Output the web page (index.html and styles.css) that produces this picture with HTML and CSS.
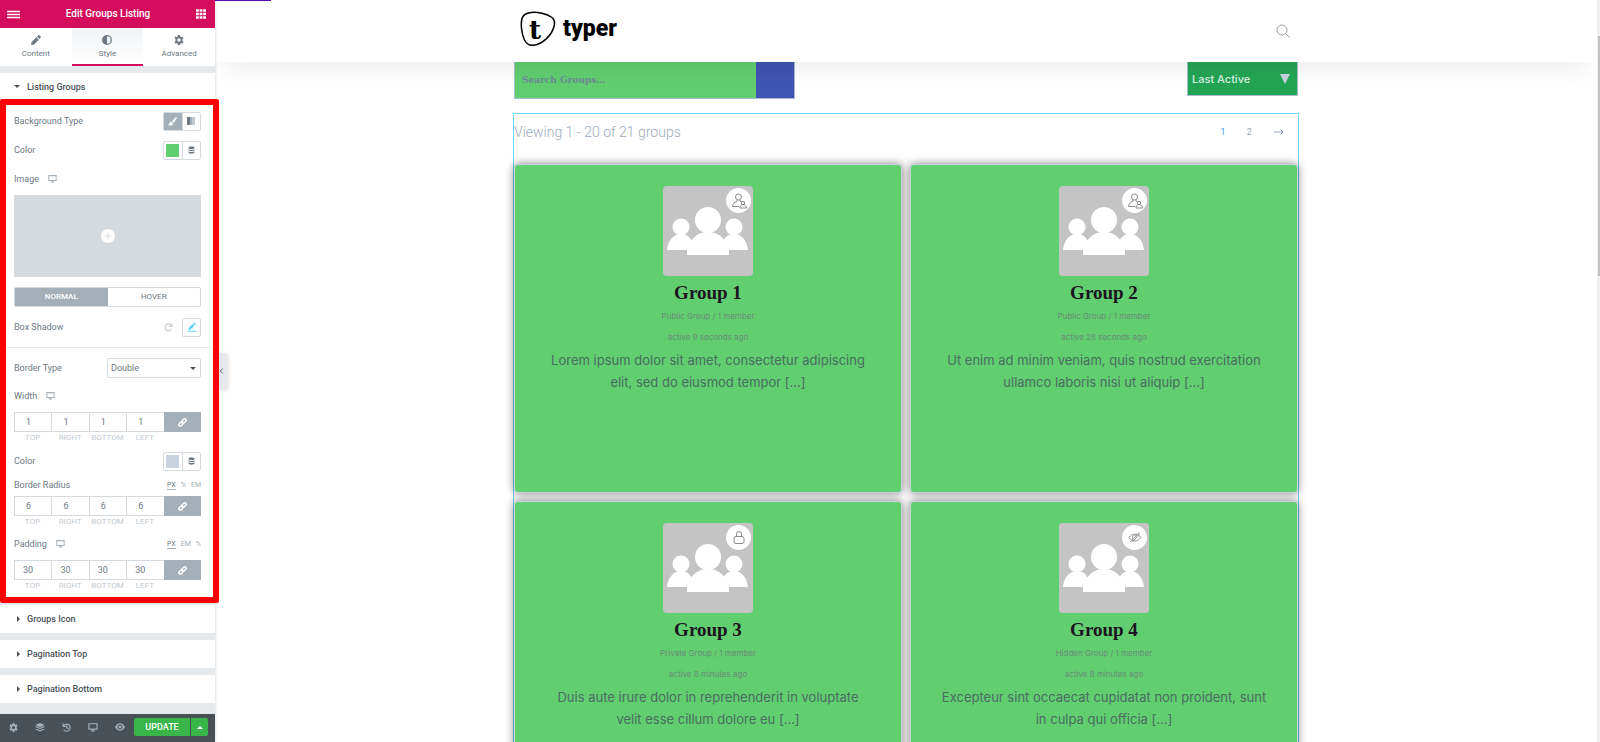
FILE: index.html
```html
<!DOCTYPE html>
<html lang="en">
<head>
  <meta charset="UTF-8">
  <meta name="viewport" content="width=device-width, initial-scale=1">
  <title>Edit Groups Listing</title>
  <link rel="stylesheet" href="styles.css">
</head>
<body>
  <!-- shared icons -->
  <svg class="sprite" aria-hidden="true">
    <symbol id="i-desktop" viewBox="0 0 16 14"><path d="M1.5 1h13v8.500h-13zM8 9.500V12M5 12.500h6" fill="none" stroke="currentColor" stroke-width="1.800"/></symbol>
    <symbol id="i-db" viewBox="0 0 14 16"><path d="M1 3c0-3 12-3 12 0v1.500c0 2-12 2-12 0zM1 6.500c2 2 10 2 12 0v2c0 2-12 2-12 0zM1 10.500c2 2 10 2 12 0v2.500c0 3-12 3-12 0z" fill="currentColor"/></symbol>
    <symbol id="i-link" viewBox="0 0 16 16"><g fill="none" stroke="currentColor" stroke-width="2.600" transform="rotate(-45 8 8)"><rect x="0" y="5.500" width="8.500" height="5" rx="2.500"/><rect x="7.500" y="5.500" width="8.500" height="5" rx="2.500"/></g></symbol>
    <symbol id="i-gear" viewBox="0 0 16 16"><path fill="currentColor" fill-rule="evenodd" d="M6.500 0h3l.5 2.200 1.500.8 2.200-.7 1.500 2.600L13.600 6.500v3l1.600 1.600-1.500 2.600-2.200-.7-1.500.8-.5 2.200h-3L6 13.800 4.500 13l-2.200.7-1.500-2.600L2.400 9.500v-3L.8 4.900l1.500-2.600 2.200.7L6 2.200zM8 5.200a2.800 2.800 0 100 5.600 2.800 2.800 0 000-5.600z"/></symbol>
    <symbol id="i-pencil" viewBox="0 0 16 16"><path fill="currentColor" d="M0 16l1-5 7.500-7.500 4 4L5 15zM9.500 2.500L11.500.6c.6-.6 1.400-.6 2 0l1.900 1.900c.6.6.6 1.400 0 2l-1.900 2z"/></symbol>
    <symbol id="i-people" viewBox="0 0 90 90">
      <g fill="#fff"><circle cx="18" cy="41" r="8.500"/><circle cx="71" cy="41" r="8.500"/><circle cx="45" cy="34" r="13"/>
      <path d="M4 64c1-10 7-16 14-16s11 4 14 16zM57 64c3-12 7-16 14-16s13 6 14 16zM24 69v-6C29 50 36 46 45 46s16 4 21 17v6z"/></g>
    </symbol>
    <symbol id="i-public" viewBox="0 0 16 16"><g fill="none" stroke="currentColor"><circle cx="7.500" cy="4" r="3"/><path d="M6 7v1.500C3 9.500 1.500 11 1.500 13.500H8M9 7v1l1.500 1"/><circle cx="12" cy="10" r="1.700"/><path d="M11 11.500c-1.500.8-2 2-2 3.500h6.500c0-1.500-.8-2.700-2.500-3.500"/></g></symbol>
    <symbol id="i-lock" viewBox="0 0 16 16"><g fill="none" stroke="currentColor"><rect x="3" y="6.500" width="10" height="7" rx="2"/><path d="M5.500 6.500V4a2.500 2.500 0 015 0v2.500"/></g></symbol>
    <symbol id="i-hidden" viewBox="0 0 16 16"><g fill="none" stroke="currentColor" stroke-width=".9"><path d="M2 7.500c3-4.500 9-4.500 12 0-3 4.500-9 4.500-12 0z"/><path d="M6 9a2.300 2.300 0 014-3M3.500 12l9-10M5.500 12l7-8"/></g></symbol>
  </svg>

  <div class="editor">
    <aside class="panel">
      <header class="panel-header">
        <button class="plain" aria-label="Menu">
          <svg width="13" height="9" viewBox="0 0 13 9"><path d="M0 1.500h13M0 4.500h13M0 7.500h13" stroke="currentColor" stroke-width="1.700"/></svg>
        </button>
        <h1>Edit Groups Listing</h1>
        <button class="plain" aria-label="Widgets">
          <svg width="10" height="10" viewBox="0 0 10 10"><path d="M0 1.500h10M0 5h10M0 8.500h10" stroke="currentColor" stroke-width="2.600" stroke-dasharray="2.800 .8"/></svg>
        </button>
      </header>

      <nav class="panel-tabs">
        <button class="plain"><svg width="10" height="10"><use href="#i-pencil"/></svg>Content</button>
        <button class="plain active"><svg width="10" height="10" viewBox="0 0 16 16"><circle cx="8" cy="8" r="7" fill="none" stroke="currentColor" stroke-width="2"/><path d="M8 1a7 7 0 000 14z" fill="currentColor"/></svg>Style</button>
        <button class="plain"><svg width="10" height="10"><use href="#i-gear"/></svg>Advanced</button>
      </nav>

      <section class="listing">
        <h2 class="section-title open"><button class="plain">Listing Groups</button></h2>
        <div class="controls">
          <div class="row">
            <span class="label">Background Type</span>
            <div class="choices">
              <button class="plain on" aria-label="Classic"><svg width="9" height="9" viewBox="0 0 16 16"><path fill="currentColor" d="M15.500.5c1 1 0 2.500-1 4L10 10 7 7.500l5-5.500C13 .8 14.500-.3 15.500.5zM6 8.500L9 11c0 3.500-4 5.500-9 3 2.500-.5 2-5.500 6-5.500z"/></svg></button>
              <button class="plain" aria-label="Gradient"><svg width="8" height="8" viewBox="0 0 8 8"><path d="M0 0h3v8H0z" fill="#6d7882"/><path d="M3 0h2v8H3z" fill="#a4afb7"/><path d="M5 0h3v8H5z" fill="#c2cbd2"/></svg></button>
            </div>
          </div>
          <div class="row row-color">
            <span class="label">Color</span>
            <div class="choices">
              <button class="plain" aria-label="Pick color"><i class="swatch green"></i></button>
              <button class="plain" aria-label="Color library"><svg width="7" height="8"><use href="#i-db"/></svg></button>
            </div>
          </div>
          <div class="row row-image">
            <span class="label">Image</span>
            <svg class="device" width="9" height="8"><use href="#i-desktop"/></svg>
          </div>
          <button class="plain media" aria-label="Choose image">
            <svg width="14" height="14" viewBox="0 0 14 14"><circle cx="7" cy="7" r="7" fill="#fff"/><path d="M7 3.500v7M3.500 7h7" stroke="#d5dadf"/></svg>
          </button>
          <div class="states">
            <button class="plain on">NORMAL</button>
            <button class="plain">HOVER</button>
          </div>
          <div class="row row-shadow">
            <span class="label">Box Shadow</span>
            <button class="plain reset" aria-label="Reset"><svg width="9" height="9" viewBox="0 0 16 16"><path d="M13 4a6.200 6.200 0 10.500 7M14 1v5H9" fill="none" stroke="currentColor" stroke-width="2"/></svg></button>
            <button class="plain edit" aria-label="Edit shadow"><svg width="10" height="10" viewBox="0 0 16 16"><path fill="currentColor" d="M2 13l1-4 6-6 3 3-6.500 6zM10 2l1.500-1.500 3 3L13 5zM1 14h14v1.500H1z"/></svg></button>
          </div>

          <div class="row row-type">
            <label class="label" for="borderType">Border Type</label>
            <div class="select">
              <select id="borderType">
                <option>Double</option>
                <option>Solid</option>
                <option>Dotted</option>
              </select>
            </div>
          </div>
          <div class="row row-width">
            <span class="label">Width</span>
            <svg class="device" width="9" height="8"><use href="#i-desktop"/></svg>
          </div>
          <div class="dimensions">
            <label><input type="text" value="1">TOP</label>
            <label><input type="text" value="1">RIGHT</label>
            <label><input type="text" value="1">BOTTOM</label>
            <label><input type="text" value="1">LEFT</label>
            <button class="plain" aria-label="Link values"><svg width="9" height="9"><use href="#i-link"/></svg></button>
          </div>
          <div class="row row-border-color">
            <span class="label">Color</span>
            <div class="choices">
              <button class="plain" aria-label="Pick border color"><i class="swatch gray"></i></button>
              <button class="plain" aria-label="Color library"><svg width="7" height="8"><use href="#i-db"/></svg></button>
            </div>
          </div>
          <div class="row row-radius">
            <span class="label">Border Radius</span>
            <div class="units"><button class="plain on">PX</button><button class="plain">%</button><button class="plain">EM</button></div>
          </div>
          <div class="dimensions">
            <label><input type="text" value="6">TOP</label>
            <label><input type="text" value="6">RIGHT</label>
            <label><input type="text" value="6">BOTTOM</label>
            <label><input type="text" value="6">LEFT</label>
            <button class="plain" aria-label="Link values"><svg width="9" height="9"><use href="#i-link"/></svg></button>
          </div>
          <div class="row row-padding">
            <span class="label">Padding</span>
            <svg class="device" width="9" height="8"><use href="#i-desktop"/></svg>
            <div class="units"><button class="plain on">PX</button><button class="plain">EM</button><button class="plain">%</button></div>
          </div>
          <div class="dimensions">
            <label><input type="text" value="30">TOP</label>
            <label><input type="text" value="30">RIGHT</label>
            <label><input type="text" value="30">BOTTOM</label>
            <label><input type="text" value="30">LEFT</label>
            <button class="plain" aria-label="Link values"><svg width="9" height="9"><use href="#i-link"/></svg></button>
          </div>
        </div>
      </section>

      <div class="sections">
        <h2 class="section-title"><button class="plain">Groups Icon</button></h2>
        <h2 class="section-title"><button class="plain">Pagination Top</button></h2>
        <h2 class="section-title"><button class="plain">Pagination Bottom</button></h2>
      </div>

      <footer class="panel-footer">
        <div class="tools">
          <button class="plain" aria-label="Settings"><svg width="9" height="9"><use href="#i-gear"/></svg></button>
          <button class="plain" aria-label="Navigator"><svg width="10" height="9" viewBox="0 0 16 15"><path fill="currentColor" d="M8 0l8 3.500L8 7 0 3.500zM0 6.500l2-1 6 2.700 6-2.700 2 1L8 10zM0 10.500l2-1 6 2.700 6-2.700 2 1L8 14z"/></svg></button>
          <button class="plain" aria-label="History"><svg width="9" height="9" viewBox="0 0 16 16"><path d="M2.500 5.500a6.300 6.300 0 11.500 6.500M2 1v5h5M8.500 4.500v4l3 1.500" fill="none" stroke="currentColor" stroke-width="2"/></svg></button>
          <button class="plain" aria-label="Responsive mode"><svg width="10" height="9"><use href="#i-desktop"/></svg></button>
          <button class="plain" aria-label="Preview"><svg width="10" height="8" viewBox="0 0 16 12"><path fill="currentColor" fill-rule="evenodd" d="M0 6c4-8 12-8 16 0-4 8-12 8-16 0zM8 2a4 4 0 100 8 4 4 0 000-8z"/><circle cx="8" cy="6" r="2.500" fill="currentColor"/></svg></button>
        </div>
        <div class="publish">
          <button class="plain update">UPDATE</button>
          <button class="plain more" aria-label="Save options"></button>
        </div>
      </footer>

      <button class="plain collapse" aria-label="Hide panel"><svg width="5" height="6" viewBox="0 0 5 6"><path d="M4 .5L1 3l3 2.500" fill="none" stroke="currentColor"/></svg></button>
    </aside>

    <main class="preview">
      <header class="site-header">
        <div class="container">
          <a class="logo" href="#">
            <svg width="36" height="36" viewBox="0 0 36 36"><path d="M11 1.500C17 .5 27 3 32 6.500c3 2 3 5 2 9-2 8-11 18-21 18.800-4 .4-6.500-1.300-8.500-5.300C1.500 22.500.5 13 2 7.500c1.200-4 4-5.400 9-6z" fill="none" stroke="#000" stroke-width="1.500"/><text x="15" y="28" text-anchor="middle">t</text></svg>
            <span>typer</span>
          </a>
          <button class="plain find" aria-label="Search"><svg width="14" height="14" viewBox="0 0 14 14"><circle cx="6" cy="6" r="5" fill="none" stroke="currentColor"/><path d="M9.500 9.500l4 4" stroke="currentColor"/></svg></button>
        </div>
      </header>

      <div class="page">
        <div class="toolbar">
          <form class="search">
            <input type="search" placeholder="Search Groups..." aria-label="Search Groups">
            <button class="plain" aria-label="Search"></button>
          </form>
          <div class="order">
            <select aria-label="Order by">
              <option>Last Active</option>
              <option>Most Members</option>
              <option>Newly Created</option>
            </select>
          </div>
        </div>

        <div class="widget">
          <div class="pagination">
            <span>Viewing 1 - 20 of 21 groups</span>
            <nav><a class="current" href="#">1</a><a href="#">2</a><a class="next" href="#" aria-label="Next"><svg width="10" height="6" viewBox="0 0 10 6"><path d="M0 3h9M6.500 .5L9 3 6.500 5.500" fill="none" stroke="currentColor"/></svg></a></nav>
          </div>

          <div class="groups">
            <article class="group">
              <div class="avatar"><svg width="90" height="90"><use href="#i-people"/></svg><span class="badge"><svg width="16" height="16"><use href="#i-public"/></svg></span></div>
              <h3>Group 1</h3>
              <p class="meta">Public Group / 1 member</p>
              <p class="meta">active 9 seconds ago</p>
              <p class="desc">Lorem ipsum dolor sit amet, consectetur adipiscing elit, sed do eiusmod tempor […]</p>
            </article>
            <article class="group">
              <div class="avatar"><svg width="90" height="90"><use href="#i-people"/></svg><span class="badge"><svg width="16" height="16"><use href="#i-public"/></svg></span></div>
              <h3>Group 2</h3>
              <p class="meta">Public Group / 1 member</p>
              <p class="meta">active 28 seconds ago</p>
              <p class="desc">Ut enim ad minim veniam, quis nostrud exercitation ullamco laboris nisi ut aliquip […]</p>
            </article>
            <article class="group">
              <div class="avatar"><svg width="90" height="90"><use href="#i-people"/></svg><span class="badge"><svg width="16" height="16"><use href="#i-lock"/></svg></span></div>
              <h3>Group 3</h3>
              <p class="meta">Private Group / 1 member</p>
              <p class="meta">active 8 minutes ago</p>
              <p class="desc">Duis aute irure dolor in reprehenderit in voluptate velit esse cillum dolore eu […]</p>
            </article>
            <article class="group">
              <div class="avatar"><svg width="90" height="90"><use href="#i-people"/></svg><span class="badge"><svg width="16" height="16"><use href="#i-hidden"/></svg></span></div>
              <h3>Group 4</h3>
              <p class="meta">Hidden Group / 1 member</p>
              <p class="meta">active 8 minutes ago</p>
              <p class="desc">Excepteur sint occaecat cupidatat non proident, sunt in culpa qui officia […]</p>
            </article>
          </div>
        </div>
      </div>
    </main>
    <div class="scrollbar"><div class="thumb"></div></div>
  </div>
</body>
</html>
```
FILE: styles.css
```css
* {
  box-sizing: border-box;
}

body {
  margin: 0;
  background: #fff;
  font-family: Roboto, sans-serif;
}

h1, h2, h3, p {
  margin: 0;
}

.sprite {
  display: none;
}

.plain {
  border: 0;
  margin: 0;
  padding: 0;
  background: none;
  color: inherit;
  font: inherit;
  cursor: pointer;
  display: flex;
  align-items: center;
  justify-content: center;
}

.editor {
  display: flex;
  height: 100vh;
  overflow: hidden;
}

/* left panel */
.panel {
  position: relative;
  z-index: 3;
  flex: 0 0 215px;
  min-width: 0;
  display: flex;
  flex-direction: column;
  background: #e6e9ec;
  color: #6d7882;
  font-size: 9px;
  line-height: 12px;
  box-shadow: 0 0 3px rgba(0, 0, 0, 0.2);
}

.panel-header {
  display: flex;
  align-items: center;
  justify-content: space-between;
  height: 28px;
  padding: 0 9px 0 7px;
  background: #d30c5c;
  color: #fff;
}

.panel-header h1 {
  font-size: 10px;
  font-weight: 500;
}

.panel-tabs {
  display: grid;
  grid-template-columns: repeat(3, 1fr);
  height: 38px;
  background: #fff;
  font-size: 8px;
  line-height: 12px;
}

.panel-tabs button {
  flex-direction: column;
  gap: 3px;
  padding-top: 2px;
  border-bottom: 2px solid transparent;
}

.panel-tabs .active {
  background: linear-gradient(#f1f3f5, #fff);
  border-color: #d30c5c;
}

.listing {
  margin-top: 7px;
}

.section-title {
  height: 28px;
  background: #fff;
  color: #495157;
  font-size: 9px;
  font-weight: 500;
}

.section-title button {
  width: 100%;
  height: 100%;
  justify-content: flex-start;
  padding-left: 17px;
}

.section-title button::before {
  content: "";
  margin-right: 7px;
  border: 3px solid transparent;
  border-left-color: #495157;
  border-right: 0;
}

.section-title.open {
  height: 27px;
}

.section-title.open button {
  padding-left: 14px;
}

.section-title.open button::before {
  border: 3px solid transparent;
  border-top-color: #495157;
  border-bottom: 0;
}

.controls {
  position: relative;
  padding: 11px 14px;
  background: #fff;
}

/* red frame lies over the section and sticks out of the panel */
.controls::after {
  content: "";
  position: absolute;
  inset: -1px -4px 0 0;
  border: 6px solid #f00;
  border-radius: 2px;
  pointer-events: none;
}

.row {
  display: flex;
  align-items: center;
  height: 20px;
}

.label {
  margin-right: auto;
}

.device {
  color: #a4afb7;
}

.row-image .label,
.row-width .label,
.row-padding .label {
  margin-right: 9px;
}

.choices {
  display: flex;
  width: 38px;
  height: 19px;
  border: 1px solid #d5dadf;
  border-radius: 2px;
}

.choices button {
  flex: 1;
}

.choices button + button {
  border-left: 1px solid #d5dadf;
}

.choices .on {
  background: #a4afb7;
  color: #fff;
}

.swatch {
  width: 13px;
  height: 13px;
}

.swatch.green {
  background: #61ce70;
}

.swatch.gray {
  background: #c9d3df;
}

.row-color,
.row-image {
  margin-top: 9px;
}

.media {
  width: 100%;
  height: 82px;
  margin-top: 6px;
  background: #d5dadf;
}

.states {
  display: grid;
  grid-template-columns: 1fr 1fr;
  height: 20px;
  margin-top: 10px;
  border: 1px solid #d5dadf;
  border-radius: 2px;
  font-size: 8px;
}

.states .on {
  background: #a4afb7;
  color: #fff;
  font-weight: 500;
}

.row-shadow {
  margin-top: 10px;
}

.reset {
  margin-right: 9px;
  color: #c2cbd2;
}

.edit {
  width: 19px;
  height: 19px;
  border: 1px solid #d5dadf;
  border-radius: 2px;
  color: #5bd2fb;
}

.row-type {
  height: 40px;
  margin: 10px -14px 0;
  padding: 0 14px;
  border-top: 1px solid #e6e9ec;
}

.select {
  position: relative;
  width: 94px;
}

.select select {
  appearance: none;
  width: 100%;
  height: 20px;
  padding: 0 3px;
  border: 1px solid #d5dadf;
  border-radius: 2px;
  background: #fff;
  color: #6d7882;
  font: 9px Roboto, sans-serif;
}

.select::after {
  content: "";
  position: absolute;
  top: 9px;
  right: 5px;
  border: 3px solid transparent;
  border-top-color: #495157;
  border-bottom: 0;
}

.dimensions {
  display: grid;
  grid-template-columns: repeat(5, 1fr);
  height: 32px;
}

.dimensions label {
  color: #c2cbd2;
  font-size: 8px;
  line-height: 12px;
  text-align: center;
}

.dimensions input {
  display: block;
  width: 100%;
  height: 20px;
  padding: 0 8px;
  border: 1px solid #d5dadf;
  border-right: 0;
  color: #6d7882;
  font: 9px Roboto, sans-serif;
  text-align: left;
}

.dimensions input[value="1"],
.dimensions input[value="6"] {
  padding-left: 11px;
}

.dimensions button {
  height: 20px;
  background: #a4afb7;
  color: #fff;
}

.row-width {
  margin: -1px 0 6px;
}

.row-border-color {
  margin-top: 7px;
}

.row-radius {
  margin: 4px 0 1px;
}

.row-padding {
  margin: 6px 0;
}

.units {
  display: flex;
  gap: 5px;
  margin-left: auto;
  font-size: 7px;
  line-height: 8px;
  color: #a4afb7;
}

.units .on {
  color: #6d7882;
  border-bottom: 1px solid #a4afb7;
}

.sections {
  display: flex;
  flex-direction: column;
  gap: 7px;
  margin-top: 2px;
}

.panel-footer {
  display: flex;
  align-items: center;
  justify-content: space-between;
  height: 28px;
  margin-top: auto;
  padding: 0 7px 2px 9px;
  background: #495157;
  color: #a4afb7;
}

.tools {
  display: flex;
  align-items: center;
  gap: 17px;
}

.publish {
  display: flex;
  gap: 1px;
  color: #fff;
  font-weight: 500;
}

.update {
  width: 56px;
  height: 18px;
  border-radius: 2px 0 0 2px;
  background: #39b54a;
}

.more {
  width: 17px;
  height: 18px;
  border-radius: 0 2px 2px 0;
  background: #39b54a;
}

.more::before {
  content: "";
  border: 3px solid transparent;
  border-bottom-color: #fff;
  border-top: 0;
}

.collapse {
  position: absolute;
  z-index: -1;
  left: 100%;
  top: 353px;
  width: 12px;
  height: 36px;
  border-radius: 0 2px 2px 0;
  background: #e6e9ec;
  box-shadow: 1px 1px 4px rgba(0, 0, 0, 0.15);
}

/* site preview */
.preview {
  flex: 1;
  min-width: 0;
  overflow: hidden;
}

.site-header {
  position: relative;
  z-index: 1;
  height: 62px;
  background: #fff;
  box-shadow: 0 14px 24px -8px rgba(0, 0, 0, 0.08);
}

.site-header::before {
  content: "";
  position: absolute;
  top: 0;
  left: 0;
  width: 56px;
  height: 1px;
  background: #5a0ca8;
}

.container,
.page {
  max-width: 786px;
  margin: 0 auto;
}

.container {
  display: flex;
  align-items: center;
  justify-content: space-between;
  height: 58px;
  padding: 0 9px 0 7px;
}

.logo {
  display: flex;
  align-items: center;
  gap: 7px;
  color: #000;
  text-decoration: none;
  font-size: 23px;
  font-weight: 900;
  line-height: 24px;
}

.logo text {
  font-family: "DejaVu Serif", serif;
  font-size: 26px;
  font-weight: bold;
}

.find {
  padding-top: 4px;
  color: #a0a0a0;
}

.toolbar {
  display: flex;
  align-items: flex-start;
  justify-content: space-between;
  height: 51px;
  padding: 0 1px;
}

.search {
  display: flex;
  width: 281px;
  height: 37px;
  border: 1px solid #a9bcd3;
  border-top: 0;
}

.search input {
  flex: 1;
  min-width: 0;
  padding: 0 7px;
  border: 0;
  background: #61ce70;
  font: bold 9px "DejaVu Serif", serif;
}

.search input::placeholder {
  color: #6f8796;
}

.search button {
  width: 38px;
  background: #4054b2;
}

.order {
  position: relative;
  width: 111px;
}

.order select {
  appearance: none;
  width: 100%;
  height: 34px;
  padding: 0 4px;
  border: 1px solid #a9bcd3;
  border-top: 0;
  border-radius: 0;
  background: #23a455;
  color: #d9f0e2;
  font: 500 11px Inter, sans-serif;
}

.order::after {
  content: "";
  position: absolute;
  top: 12px;
  right: 8px;
  border: 5px solid transparent;
  border-top: 10px solid #c9d3df;
  border-bottom: 0;
}

.widget {
  border: 1px solid #71d7f7;
}

.pagination {
  display: flex;
  align-items: center;
  justify-content: space-between;
  height: 50px;
  padding-bottom: 15px;
  color: #9dabbe;
  font-size: 14px;
  font-weight: 300;
}

.pagination nav {
  display: flex;
  align-items: center;
  gap: 22px;
  padding-right: 14px;
  font: 9px Inter, sans-serif;
}

.pagination a {
  color: #94a3b8;
  text-decoration: none;
}

.pagination .current {
  color: #4aa3e8;
}

.next {
  display: flex;
}

.groups {
  display: grid;
  grid-template-columns: repeat(2, 1fr);
  grid-auto-rows: 329px;
  gap: 8px;
}

.group {
  padding: 21px 29px;
  border: 1px solid #c9d3df;
  border-radius: 4px;
  background: #61ce70;
  box-shadow: 0 0 8px rgba(0, 0, 0, 0.5);
  text-align: center;
}

.avatar {
  position: relative;
  width: 90px;
  height: 90px;
  margin: 0 auto;
  border-radius: 4px;
  background: #c4c4c4;
}

.badge {
  position: absolute;
  top: 2px;
  right: 2px;
  display: flex;
  align-items: center;
  justify-content: center;
  width: 25px;
  height: 25px;
  border-radius: 50%;
  background: #fff;
  color: #8a8a8a;
}

.group h3 {
  margin: 5px 0 1px;
  color: #1c1220;
  font: bold 19px/24px "Liberation Serif", serif;
}

.meta {
  color: #6c8a77;
  font: 8px/21px Inter, sans-serif;
}

.desc {
  margin-top: 1px;
  color: #4c6c62;
  font: 13px/22px Inter, sans-serif;
}

/* preview scrollbar */
.scrollbar {
  flex: 0 0 3px;
  padding: 36px 0 0 1px;
  background: #f1f1f1;
}

.thumb {
  height: 240px;
  background: #c1c1c1;
}
```
